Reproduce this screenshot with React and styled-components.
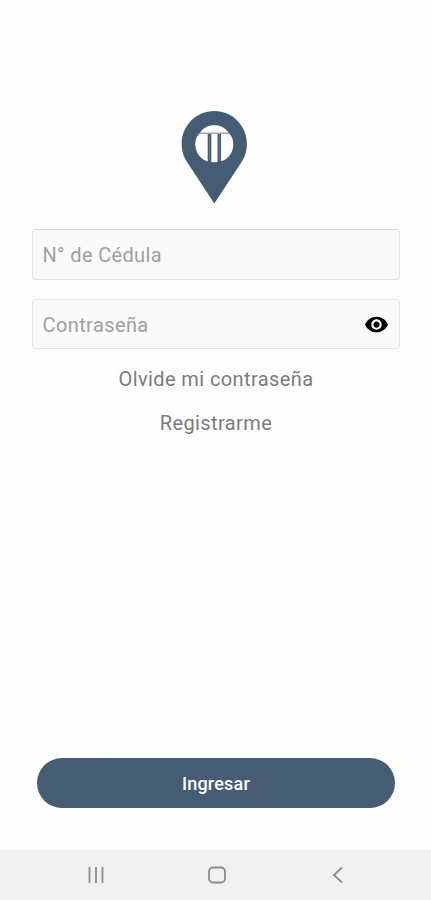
import React from 'react'
import styled, { createGlobalStyle } from 'styled-components'

const GlobalStyle = createGlobalStyle`
  * {
    box-sizing: border-box;
  }

  body {
    margin: 0;
    background-color: #fefefe;
    font-family: Roboto, 'Liberation Sans', sans-serif;
  }
`

const Container = styled.div`
  height: 100vh;
  display: flex;
  flex-direction: column;
  background-color: #fefefe;
`

const Logo = styled.svg`
  display: block;
  width: 66px;
  height: 94px;
  margin: 110px auto 0 181px;
`

const Form = styled.form`
  flex: 1;
  display: flex;
  flex-direction: column;
  padding: 25px 31px 42px 32px;
`

const Field = styled.label`
  height: ${(props) => props.$height}px;
  margin-bottom: 19px;
  padding: ${(props) => props.$drop || 0}px 10px 0 9.5px;
  display: flex;
  align-items: center;
  background-color: #fafafa;
  border: 1px solid #e2e2e2;
  border-top-color: ${(props) => props.$top};
  border-radius: 4px;
`

const Input = styled.input`
  flex: 1;
  min-width: 0;
  padding: 0;
  border: none;
  outline: none;
  background: transparent;
  font-family: inherit;
  font-size: 20px;
  letter-spacing: ${(props) => props.$spacing}px;
  color: #555;

  &::placeholder {
    color: #a0a0a0;
    opacity: 1;
  }
`

const Eye = styled.svg`
  width: 25px;
  height: 25px;
`

const Links = styled.div`
  margin-top: -1px;
  display: flex;
  flex-direction: column;
  align-items: center;
  gap: 20px;
`

const TextLink = styled.a`
  font-size: 20px;
  line-height: 24px;
  letter-spacing: 0.4px;
  color: #7b7b7b;
`

const Button = styled.button`
  height: 50px;
  margin: auto 5px 0;
  padding: 0;
  border: none;
  border-radius: 25px;
  background-color: #465b74;
  color: white;
  font-family: inherit;
  font-size: 18px;
  font-weight: 500;
  letter-spacing: 0.2px;
  cursor: pointer;
`

const NavBar = styled.div`
  height: 50px;
  display: grid;
  grid-template-columns: repeat(3, 121px);
  justify-content: center;
  align-items: center;
  justify-items: center;
  padding-left: 3px;
  background-color: #f0f0f0;
`

const NavIcon = styled.svg`
  width: 20px;
  height: 20px;
  fill: none;
  stroke: #8c8c8c;
  stroke-width: 1.8;
`

const App = () => {
  return (
    <>
      <GlobalStyle />
      <Container>
        <Logo viewBox='0 0 66 94'>
          <path
            fill='#465b74'
            d='M33.300 1C15.300 1 .7 15.500 .7 34c0 7.500 2.200 13.500 6.300 19.500L33.300 93.500 59.600 53.500C63.700 47.500 65.900 41.500 65.900 34 65.900 15.500 51.300 1 33.300 1Z'
          />
          <path fill='white' d='M19 22.800C22 17.800 27 15.300 33.300 15.300S44.500 17.800 47.500 22.800Z' />
          <path
            fill='white'
            d='M18 24H48.500C51 26.500 52.300 30 52.300 34.300 52.300 45 44.500 52.300 33.300 52.300S14.300 45 14.300 34.300C14.300 30 15.500 26.500 18 24Z'
          />
          <path stroke='#a9b3bf' strokeWidth='1' d='M18 23.400H48.500' />
          <path stroke='#465b74' strokeWidth='3.600' d='M28.500 24V53M38.300 24V53' />
          <path stroke='#8391a1' strokeWidth='.5' d='M28.500 25V51M38.300 25V51' />
        </Logo>
        <Form onSubmit={(e) => e.preventDefault()}>
          <Field $height={51} $top='#d6d6d6'>
            <Input placeholder='N° de Cédula' $spacing={0.35} />
          </Field>
          <Field $height={50} $top='#e6e6e6' $drop={1}>
            <Input type='password' placeholder='Contraseña' $spacing={0.4} />
            <Eye viewBox='0 0 24 24'>
              <path d='M12 4.500C7 4.500 2.730 7.610 1 12c1.730 4.390 6 7.500 11 7.500s9.270-3.110 11-7.500c-1.730-4.390-6-7.500-11-7.500zM12 17c-2.760 0-5-2.240-5-5s2.240-5 5-5 5 2.240 5 5-2.240 5-5 5zm0-8c-1.660 0-3 1.340-3 3s1.340 3 3 3 3-1.340 3-3-1.340-3-3-3z' />
            </Eye>
          </Field>
          <Links>
            <TextLink>Olvide mi contraseña</TextLink>
            <TextLink>Registrarme</TextLink>
          </Links>
          <Button>Ingresar</Button>
        </Form>
        <NavBar>
          <NavIcon viewBox='0 0 20 20'>
            <path d='M3.500 2V18M10 2V18M16.500 2V18' />
          </NavIcon>
          <NavIcon viewBox='0 0 20 20'>
            <rect x='2' y='2.500' width='16' height='15' rx='4' />
          </NavIcon>
          <NavIcon viewBox='0 0 20 20'>
            <path d='M14 2.500 6 10 14 17.500' />
          </NavIcon>
        </NavBar>
      </Container>
    </>
  )
}

export default App
